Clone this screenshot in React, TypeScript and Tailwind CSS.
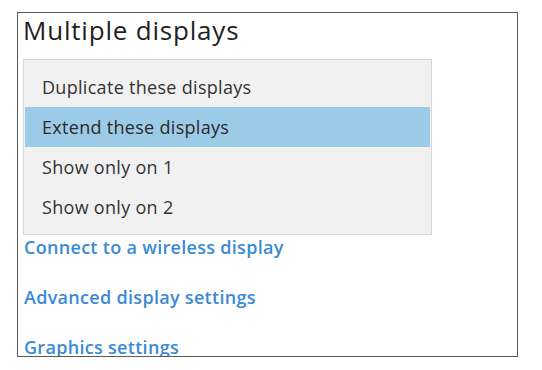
import React from "react";

const options = [
  "Duplicate these displays",
  "Extend these displays",
  "Show only on 1",
  "Show only on 2",
];

const links = [
  "Connect to a wireless display",
  "Advanced display settings",
  "Graphics settings",
];

function App() {
  const selected = 1;

  return (
    <div
      className="w-[542px] h-[370px] bg-white pt-[12px] pl-[17px]"
      style={{ fontFamily: '"Open Sans", "Noto Sans", sans-serif' }}
    >
      <div className="w-[501px] h-[345px] border border-[#5a5a5a] overflow-hidden">
        <h1 className="pl-[5px] pt-[1px] text-[26px] leading-[32px] text-[#1f1f1f] tracking-[0.8px]">
          Multiple displays
        </h1>
        <div className="ml-[5px] mt-[13px] w-[409px] h-[176px] border border-[#d6d6d6] bg-[#f1f1f1] py-[7px] px-[1px]">
          {options.map((opt, i) => (
            <div
              key={opt}
              className={
                i === selected
                  ? "h-[40px] flex items-center pl-[17px] bg-[#9ccbe8] text-[18px] tracking-[0.3px] text-[#2a2a2a]"
                  : "h-[40px] flex items-center pl-[17px] text-[18px] tracking-[0.3px] text-[#333333]"
              }
            >
              {opt}
            </div>
          ))}
        </div>
        <div className="pl-[6px] flex flex-col">
          {links.map((l, i) => (
            <a
              key={l}
              className={
                i === 0
                  ? "h-[24px] flex items-center text-[18px] tracking-[0.3px] font-semibold text-[#3a8ad6]"
                  : "h-[24px] flex items-center text-[18px] tracking-[0.3px] font-semibold text-[#3a8ad6] mt-[26px]"
              }
            >
              {l}
            </a>
          ))}
        </div>
      </div>
    </div>
  );
}

export default App;
